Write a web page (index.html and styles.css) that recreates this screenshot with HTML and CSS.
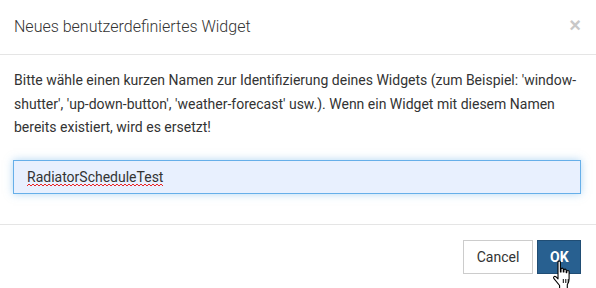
FILE: index.html
```html
<!DOCTYPE html>
<html lang="de">
<head>
    <meta charset="UTF-8">
    <title>Neues benutzerdefiniertes Widget</title>
    <link rel="stylesheet" href="styles.css">
</head>
<body>
    <div class="modal-content">
        <div class="modal-header">
            <h4 class="modal-title">Neues benutzerdefiniertes Widget</h4>
            <button type="button" class="close">&times;</button>
        </div>
        <div class="modal-body">
            <p>Bitte wähle einen kurzen Namen zur Identifizierung deines Widgets (zum Beispiel: 'window-shutter', 'up-down-button', 'weather-forecast' usw.). Wenn ein Widget mit diesem Namen bereits existiert, wird es ersetzt!</p>
            <div class="input-wrap">
                <input type="text" class="form-control" value="RadiatorScheduleTest">
                <svg class="spell" width="136" height="4" viewBox="0 0 136 4">
                    <polyline points="0,3 2,1 4,3 6,1 8,3 10,1 12,3 14,1 16,3 18,1 20,3 22,1 24,3 26,1 28,3 30,1 32,3 34,1 36,3 38,1 40,3 42,1 44,3 46,1 48,3 50,1 52,3 54,1 56,3 58,1 60,3 62,1 64,3 66,1 68,3 70,1 72,3 74,1 76,3 78,1 80,3 82,1 84,3 86,1 88,3 90,1 92,3 94,1 96,3 98,1 100,3 102,1 104,3 106,1 108,3 110,1 112,3 114,1 116,3 118,1 120,3 122,1 124,3 126,1 128,3 130,1 132,3 134,1 136,3" fill="none" stroke="#e22" stroke-width="1"/>
                </svg>
            </div>
        </div>
        <div class="modal-footer">
            <button type="button" class="btn btn-default">Cancel</button>
            <button type="button" class="btn btn-primary">OK
                <svg class="cursor" width="22" height="30" viewBox="0 0 22 30">
                    <path d="M7 2.2c0-1.6 2.4-1.6 2.4 0V12h.6V9.2c0-1.5 2.3-1.5 2.3 0V12h.6V10.2c0-1.5 2.3-1.5 2.3 0V12.6h.6V11.6c0-1.5 2.3-1.5 2.3 0v7.4c0 2.6-.8 4.2-1.8 5.6V28.5H8.6v-3L3 18.6c-1.1-1.3.4-3 1.8-1.9L7 18.8z" fill="#fff" stroke="#000" stroke-width="1.1" stroke-linejoin="round"/>
                    <path d="M12.3 19v4M14.8 19v4M17.2 19v4" stroke="#000" stroke-width="1"/>
                </svg>
            </button>
        </div>
    </div>
</body>
</html>
```

FILE: styles.css
```css
body {
    margin: 0;
    font-family: Roboto, "Liberation Sans", sans-serif;
    font-size: 14px;
    color: #333;
    background-color: #fff;
}
.modal-content {
    width: 596px;
    height: 288px;
    overflow: hidden;
}
.modal-header {
    display: flex;
    justify-content: space-between;
    align-items: flex-start;
    padding: 13px 15px 14px 14px;
    height: 27px;
    border-bottom: 1px solid #e5e5e5;
}
.modal-title {
    margin: 0;
    font-size: 16px;
    font-weight: 300;
    line-height: 27px;
    color: #333;
}
.close {
    background: none;
    border: none;
    padding: 0;
    margin-top: 2px;
    font-family: "Liberation Sans", sans-serif;
    font-size: 20px;
    font-weight: bold;
    line-height: 20px;
    color: #c8c8c8;
}
.modal-body {
    padding: 14px 15px 15px 13px;
    height: 140px;
}
.modal-body p {
    margin: 0 0 20px 1px;
    line-height: 23.5px;
}
.input-wrap {
    position: relative;
}
.form-control {
    display: block;
    box-sizing: border-box;
    width: 100%;
    height: 34px;
    margin: 0;
    padding: 6px 13px;
    font-family: Roboto, "Liberation Sans", sans-serif;
    font-size: 14px;
    color: #333;
    background-color: #e8f0fe;
    border: 1px solid #66afe9;
    border-radius: 0;
    outline: none;
    box-shadow: 0 0 8px rgba(102, 175, 233, 0.5);
}
.spell {
    position: absolute;
    left: 14px;
    top: 23px;
}
.modal-footer {
    display: flex;
    justify-content: flex-end;
    gap: 4px;
    padding: 15px 15px 15px;
    border-top: 1px solid #e5e5e5;
}
.btn {
    position: relative;
    box-sizing: border-box;
    height: 34px;
    padding: 6px 12px;
    font-family: Roboto, "Liberation Sans", sans-serif;
    font-size: 14px;
    border: 1px solid transparent;
    border-radius: 0;
}
.btn-default {
    width: 70px;
    color: #333;
    background-color: #fff;
    border-color: #ccc;
}
.btn-primary {
    width: 44px;
    color: #fff;
    font-weight: bold;
    background-color: #286090;
    border-color: #204d74;
}
.cursor {
    position: absolute;
    left: 13px;
    top: 19px;
}
```
